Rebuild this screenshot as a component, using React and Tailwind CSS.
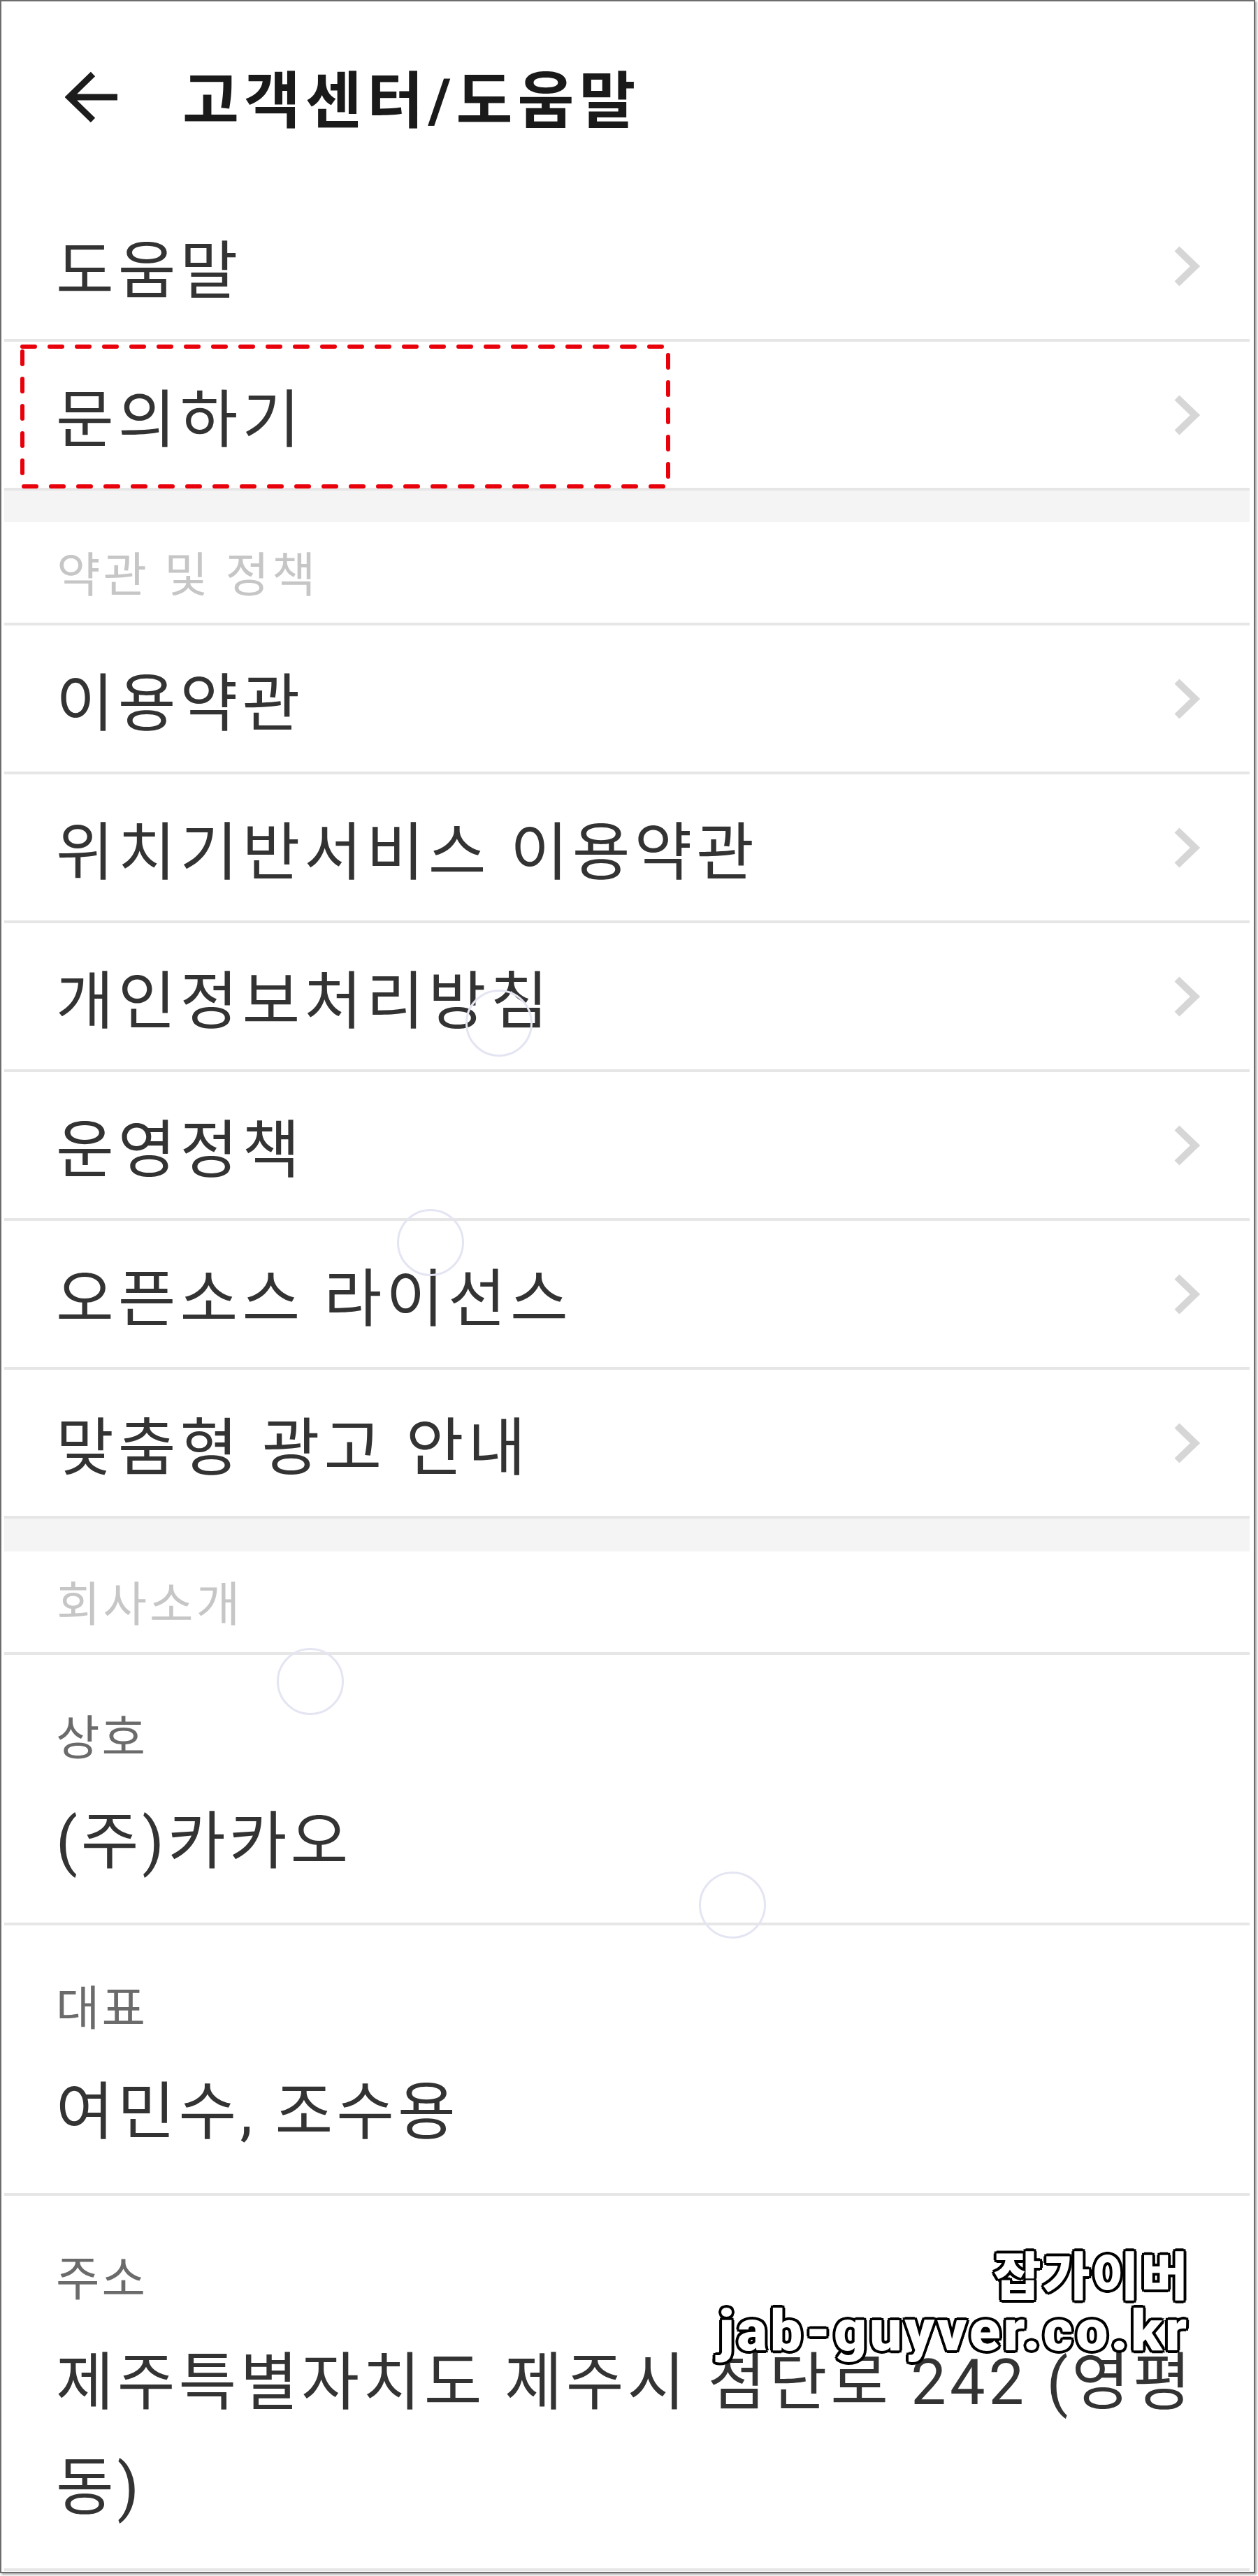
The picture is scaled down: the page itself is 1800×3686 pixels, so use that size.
const FONT = "font-['Roboto','Noto_Sans_CJK_KR',sans-serif]";

const policies = [
  '이용약관',
  '위치기반서비스 이용약관',
  '개인정보처리방침',
  '운영정책',
  '오픈소스 라이선스',
  '맞춤형 광고 안내',
];

const company = [
  { label: '상호', value: '(주)카카오' },
  { label: '대표', value: '여민수, 조수용' },
  { label: '주소', value: '제주특별자치도 제주시 첨단로 242 (영평동)' },
];

function Chevron() {
  return (
    <svg width="40" height="58" viewBox="0 0 40 58" className="shrink-0">
      <path d="M5 4 L31 29 L5 54" fill="none" stroke="#d6d6d6" strokeWidth="10" />
    </svg>
  );
}

function Divider() {
  return <div className="h-[4px] bg-[#e6e6e6]" />;
}

function LinkRow({ text }) {
  return (
    <>
      <div className="h-[209px] flex items-center justify-between pl-[74px] pr-[69px]">
        <span className="text-[90px] leading-none tracking-[6px] text-[#333] pt-[16px]">{text}</span>
        <Chevron />
      </div>
      <Divider />
    </>
  );
}

function SectionLabel({ text }) {
  return (
    <>
      <div className="h-[144px] flex items-center pl-[75px]">
        <span className="text-[68px] leading-none tracking-[4px] text-[#c6c6c6] pt-[10px]">{text}</span>
      </div>
      <Divider />
    </>
  );
}

function InfoRow({ label, value }) {
  return (
    <>
      <div className="pt-[66px] pb-[40px] pl-[74px] pr-[60px]">
        <div className="h-[100px] flex items-center text-[68px] leading-none tracking-[3px] text-[#6b6b6b] pt-[8px] mb-[27px]">
          {label}
        </div>
        <div className="text-[90px] leading-[150px] tracking-[5px] text-[#333]">{value}</div>
      </div>
      <Divider />
    </>
  );
}

function Touch({ className }) {
  return (
    <div
      className={`absolute w-[96px] h-[96px] rounded-full border-[3px] border-[#e4e5f2] ${className}`}
    />
  );
}

export default function App() {
  return (
    <div className={`w-[1800px] h-[3686px] bg-white ${FONT}`}>
      <div className="relative w-[1796px] h-[3682px] bg-white border-2 border-[#6d6d6d] shadow-[2px_2px_3px_rgba(0,0,0,0.35)] overflow-hidden">
        <div className="ml-[4px] mr-[6px]">
          {/* header */}
          <div className="h-[274px] flex items-center">
            <svg width="80" height="80" viewBox="0 0 80 80" className="ml-[87px] shrink-0">
              <path d="M6 40 H75 M40 7 L6 40 L40 73" fill="none" stroke="#1c1c1c" strokeWidth="9" />
            </svg>
            <h1 className="ml-[88px] text-[88px] leading-none tracking-[7px] font-bold text-[#1a1a1a] pt-[12px]">
              고객센터/도움말
            </h1>
          </div>

          <LinkRow text="도움말" />
          <LinkRow text="문의하기" />
          <div className="h-[45px] bg-[#f4f4f4]" />

          <SectionLabel text="약관 및 정책" />
          {policies.map((p) => (
            <LinkRow key={p} text={p} />
          ))}
          <div className="h-[47px] bg-[#f4f4f4]" />

          <SectionLabel text="회사소개" />
          {company.map((c) => (
            <InfoRow key={c.label} label={c.label} value={c.value} />
          ))}
        </div>

        {/* red highlight around 문의하기 */}
        <svg width="930" height="206" className="absolute left-[27px] top-[491px]">
          <rect
            x="3"
            y="3"
            width="924"
            height="200"
            fill="none"
            stroke="#e8000b"
            strokeWidth="6"
            strokeDasharray="18 21"
            strokeLinecap="round"
          />
        </svg>

        {/* touch indicators */}
        <Touch className="left-[664px] top-[1414px]" />
        <Touch className="left-[566px] top-[1728px]" />
        <Touch className="left-[394px] top-[2356px]" />
        <Touch className="left-[998px] top-[2676px]" />

        {/* watermark */}
        <div className="absolute right-[92px] top-[3208px] flex flex-col items-end text-white font-black [text-shadow:4px_0_0_#000,-4px_0_0_#000,0_4px_0_#000,0_-4px_0_#000,3px_3px_0_#000,-3px_-3px_0_#000,3px_-3px_0_#000,-3px_3px_0_#000]">
          <span className="text-[74px] leading-[84px] tracking-[2px] font-['Noto_Sans_CJK_KR',sans-serif]">잡가이버</span>
          <span className="text-[82px] leading-[82px] tracking-[4px] font-['Roboto',sans-serif]">jab-guyver.co.kr</span>
        </div>
      </div>
    </div>
  );
}
